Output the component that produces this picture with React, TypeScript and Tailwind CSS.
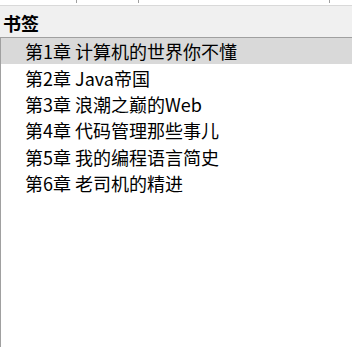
import React from "react";

const chapters = [
  "第1章 计算机的世界你不懂",
  "第2章 Java帝国",
  "第3章 浪潮之巅的Web",
  "第4章 代码管理那些事儿",
  "第5章 我的编程语言简史",
  "第6章 老司机的精进",
];

export default function App() {
  return (
    <div
      className="w-[352px] h-[347px] bg-white flex flex-col overflow-hidden"
      style={{ fontFamily: '"Microsoft YaHei", "Noto Sans CJK SC", sans-serif' }}
    >
      {/* top strip with column ticks */}
      <div className="relative h-[6px] border-b border-[#d9d9d9] shrink-0">
        <span className="absolute left-[76px] top-0 w-px h-[3px] bg-[#a0a0a0]" />
        <span className="absolute left-[138px] top-0 w-px h-[3px] bg-[#a0a0a0]" />
        <span className="absolute left-[329px] top-0 w-px h-[3px] bg-[#a0a0a0]" />
      </div>
      <div className="h-[32px] bg-[#f0f0f0] border-b border-[#a0a0a0] flex items-center pl-[3px] pt-[2px] shrink-0">
        <span className="text-[18px] font-bold text-black leading-none">书签</span>
      </div>
      <div className="flex-1 border-l border-[#a0a0a0] flex flex-col">
        {chapters.map((c, i) => (
          <div
            key={c}
            className={`h-[26.4px] flex items-center pl-[24px] text-[18px] text-black leading-none ${
              i === 0 ? "bg-[#d9d9d9]" : ""
            }`}
          >
            {c}
          </div>
        ))}
      </div>
    </div>
  );
}
